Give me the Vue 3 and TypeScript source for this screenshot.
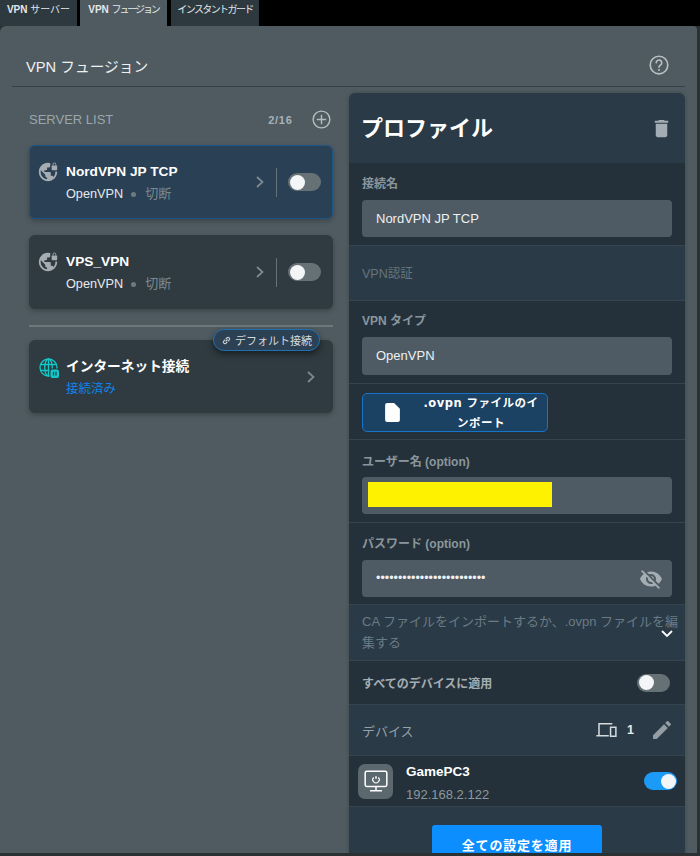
<script setup lang="ts">
const servers = [
  { name: 'NordVPN JP TCP', active: true },
  { name: 'VPS_VPN', active: false },
]
</script>

<template>
  <div class="page">
    <nav class="tabs">
      <div class="tab tab-a"><b>VPN</b> サーバー</div>
      <div class="tab tab-b active"><b>VPN</b> <span class="squeeze-b">フュージョン</span></div>
      <div class="tab tab-c"><span class="squeeze-c">インスタントガード</span></div>
    </nav>
    <main class="panel">
      <header class="head">
        <span class="head-title">VPN フュージョン</span>
        <svg class="help" viewBox="0 0 24 24" width="22" height="22" fill="none" stroke="#b8c0c4" stroke-width="1.8">
          <circle cx="12" cy="12" r="9.6" />
          <path d="M9 9.6a3 3 0 1 1 4.6 2.5c-1 .7-1.6 1.2-1.6 2.4" stroke-linecap="round" />
          <circle cx="12" cy="17.4" r="1.1" fill="#b8c0c4" stroke="none" />
        </svg>
      </header>
      <div class="columns">
        <section class="left">
          <div class="list-head">
            <span class="list-title">SERVER LIST</span>
            <span class="count">2/16</span>
            <svg viewBox="0 0 20 20" width="19" height="19" fill="none" stroke="#b4bcc0" stroke-width="1.5">
              <circle cx="10" cy="10" r="8.8" />
              <path d="M10 5v10M5 10h10" />
            </svg>
          </div>
          <article v-for="s in servers" :key="s.name" class="card server" :class="{ selected: s.active }">
            <svg class="globe" viewBox="0 0 24 24" width="22" height="22">
              <path fill="#a5adb2" d="M12 2C6.48 2 2 6.48 2 12s4.48 10 10 10 10-4.48 10-10S17.52 2 12 2zm-1 17.93c-3.95-.49-7-3.85-7-7.93 0-.62.08-1.21.21-1.79L9 15v1c0 1.1.9 2 2 2v1.93zm6.9-2.54c-.26-.81-1-1.39-1.9-1.39h-1v-3c0-.55-.45-1-1-1H8v-2h2c.55 0 1-.45 1-1V7h2c1.1 0 2-.9 2-2v-.41c2.93 1.19 5 4.06 5 7.41 0 2.08-.8 3.97-2.1 5.39z" />
              <rect class="lock-bg" x="14.5" y="0" width="9" height="11.5" />
              <rect x="16" y="5" width="6" height="5" rx=".8" fill="#a5adb2" />
              <path d="M17.5 5V3.6a1.5 1.5 0 0 1 3 0V5" fill="none" stroke="#a5adb2" stroke-width="1" />
            </svg>
            <div class="info">
              <div class="name">{{ s.name }}</div>
              <div class="sub">OpenVPN<i class="dot"></i><span class="state">切断</span></div>
            </div>
            <svg class="chev" viewBox="0 0 8 12" width="8" height="12" fill="none" stroke="#7f8a90" stroke-width="1.7"><path d="M1 1l5.5 5L1 11" /></svg>
            <span class="divider"></span>
            <span class="toggle"><span class="knob"></span></span>
          </article>
          <hr class="rule" />
          <article class="card internet">
            <span class="badge">
              <svg viewBox="0 0 12 12" width="11" height="11" fill="none" stroke="#c4ccd0" stroke-width="1.3"><path d="M5 7l2.2-2.2M4.4 5.2L3 6.6a1.7 1.7 0 0 0 2.4 2.4l1.4-1.4M5.2 4.4L6.6 3A1.7 1.7 0 0 1 9 5.4L7.6 6.8" /></svg>
              デフォルト接続
            </span>
            <svg class="globe" viewBox="0 0 20 20" width="20" height="20" fill="none" stroke="#12c8c8" stroke-width="1.3">
              <circle cx="9.5" cy="9.5" r="8.5" />
              <ellipse cx="9.5" cy="9.5" rx="3.8" ry="8.5" />
              <path d="M1.5 6.5h16M1.5 12.5h16M9.5 1v17" />
              <rect x="10.5" y="10.5" width="9.5" height="9.5" rx="2" fill="#2f3b41" stroke="none" />
              <rect x="11.5" y="11.5" width="8.5" height="8.5" rx="2" fill="#12c8c8" stroke="none" />
              <path d="M14.5 13.8v3.8M17 13.8v3.8" stroke="#2f3b41" stroke-width="1.2" />
            </svg>
            <div class="info">
              <div class="name big">インターネット接続</div>
              <div class="sub link">接続済み</div>
            </div>
            <svg class="chev solo" viewBox="0 0 8 12" width="8" height="12" fill="none" stroke="#7f8a90" stroke-width="1.7"><path d="M1 1l5.5 5L1 11" /></svg>
          </article>
        </section>

        <aside class="profile">
          <div class="p-head">
            <h1>プロファイル</h1>
            <svg viewBox="0 0 24 24" width="23" height="23" fill="#a3adb3"><path d="M6 19c0 1.1.9 2 2 2h8c1.1 0 2-.9 2-2V7H6v12zM19 4h-3.5l-1-1h-5l-1 1H5v2h14V4z" /></svg>
          </div>
          <div class="row dark r-name">
            <label>接続名</label>
            <div class="field">NordVPN JP TCP</div>
          </div>
          <div class="row r-auth"><span class="muted">VPN認証</span></div>
          <div class="row dark r-type">
            <label>VPN タイプ</label>
            <div class="field tall">OpenVPN</div>
          </div>
          <div class="row dark r-import">
            <button class="import" type="button">
              <svg viewBox="0 0 14 18" width="15" height="19" fill="#fff"><path d="M2 0h6.5L14 5.5V16a2 2 0 0 1-2 2H2a2 2 0 0 1-2-2V2a2 2 0 0 1 2-2z" /></svg>
              <span>.ovpn ファイルのインポート</span>
            </button>
          </div>
          <div class="row dark r-user">
            <label>ユーザー名 (option)</label>
            <div class="field mask"><span class="yellow"></span></div>
          </div>
          <div class="row dark r-pass">
            <label>パスワード (option)</label>
            <div class="field pass">
              <span class="dots">•••••••••••••••••••••••••</span>
              <svg viewBox="0 0 24 24" width="24" height="24" fill="#a3adb3"><path d="M12 7c2.76 0 5 2.24 5 5 0 .65-.13 1.26-.36 1.83l2.92 2.92c1.51-1.26 2.7-2.89 3.43-4.75-1.73-4.39-6-7.5-11-7.5-1.4 0-2.74.25-3.98.7l2.16 2.16C10.74 7.13 11.35 7 12 7zM2 4.27l2.28 2.28.46.46C3.08 8.3 1.78 10.02 1 12c1.73 4.39 6 7.5 11 7.5 1.55 0 3.03-.3 4.38-.84l.42.42L19.73 22 21 20.73 3.27 3 2 4.27zM7.53 9.8l1.55 1.55c-.05.21-.08.43-.08.65 0 1.66 1.34 3 3 3 .22 0 .44-.03.65-.08l1.55 1.55c-.67.33-1.41.53-2.2.53-2.76 0-5-2.24-5-5 0-.79.2-1.53.53-2.2zm4.31-.78l3.15 3.15.02-.16c0-1.66-1.34-3-3-3l-.17.01z" /></svg>
            </div>
          </div>
          <div class="row r-ca">
            <span class="muted ca">CA ファイルをインポートするか、.ovpn ファイルを編集する</span>
            <svg class="ca-chev" viewBox="0 0 12 8" width="12" height="8" fill="none" stroke="#fff" stroke-width="1.8"><path d="M1 1l5 5 5-5" /></svg>
          </div>
          <div class="row dark r-all">
            <span class="all-label">すべてのデバイスに適用</span>
            <span class="toggle"><span class="knob"></span></span>
          </div>
          <div class="row r-dev">
            <span class="dev-label">デバイス</span>
            <svg viewBox="0 0 24 18" width="22" height="16" fill="none" stroke="#d5dadd" stroke-width="1.7"><path d="M3 15V2h15M0 15.5h14M16 6h6v10h-6z" /></svg>
            <b class="dev-count">1</b>
            <svg viewBox="0 0 24 24" width="24" height="24" fill="#939da3"><path d="M3 17.25V21h3.75L17.81 9.94l-3.75-3.75L3 17.25zM20.71 7.04c.39-.39.39-1.02 0-1.41l-2.34-2.34c-.39-.39-1.02-.39-1.41 0l-1.83 1.83 3.75 3.75 1.83-1.83z" /></svg>
          </div>
          <div class="row dark r-pc">
            <span class="pc-icon">
              <svg viewBox="0 0 24 24" width="26" height="26" fill="none" stroke="#fff" stroke-width="1.4">
                <rect x="2" y="3" width="20" height="14" rx="1.5" />
                <path d="M12 17v3.5M6.5 21h11M12 7.5v2.5" />
                <path d="M9.8 8.6a3 3 0 1 0 4.4 0" stroke-width="1" />
              </svg>
            </span>
            <div class="pc-info">
              <div class="pc-name">GamePC3</div>
              <div class="pc-ip">192.168.2.122</div>
            </div>
            <span class="toggle on"><span class="knob"></span></span>
          </div>
          <div class="apply-wrap">
            <button class="apply" type="button">全ての設定を適用</button>
          </div>
        </aside>
      </div>
    </main>
  </div>
</template>

<style>
html, body { margin: 0; background: #2b3033; }
</style>

<style scoped>
.page {
  width: 700px;
  height: 856px;
  overflow: hidden;
  background: #2b3033;
  font-family: "Liberation Sans", "Noto Sans CJK JP", sans-serif;
  color: #fff;
}
.tabs { height: 26px; display: flex; align-items: flex-end; background: #000; }
.tab {
  height: 26px;
  box-sizing: border-box;
  background: #2d393f;
  color: #e3e7e9;
  font-size: 10px;
  line-height: 20px;
  text-align: center;
  white-space: nowrap;
}
.tab-a { width: 77px; margin-right: 3px; }
.tab-b { width: 87px; margin-right: 4px; }
.tab-c { width: 88px; }
.squeeze-b { letter-spacing: -2.1px; }
.squeeze-c { letter-spacing: -1.6px; }
.tab.active { background: #4f5b60; }
.panel {
  height: 827px;
  box-sizing: border-box;
  margin-right: 3px;
  background: #4f5b60;
  border-radius: 6px 4px 0 0;
  padding: 0 12px;
  overflow: hidden;
}
.head {
  height: 61px;
  box-sizing: border-box;
  display: flex;
  align-items: center;
  justify-content: space-between;
  padding: 18px 15px 0 14px;
  border-bottom: 1px solid #353f45;
}
.head-title { font-size: 14.7px; color: #eef1f2; }
.columns { display: flex; gap: 16px; }
.left { width: 321px; flex: none; }
.list-head {
  height: 58px;
  box-sizing: border-box;
  padding: 24px 2.5px 0 17px;
  display: flex;
  align-items: flex-start;
}
.list-title { font-size: 13px; color: #9aa6ac; line-height: 18px; flex: 1; }
.count { font-size: 11px; font-weight: 700; color: #a6b2ba; line-height: 18px; margin-right: 19px; letter-spacing: 0.7px; }
.list-head svg { margin-top: -1px; }
.card {
  position: relative;
  margin-left: 17px;
  width: 304px;
  box-sizing: border-box;
  height: 74px;
  border-radius: 6px;
  background: #2f3b41;
  box-shadow: 0 2px 5px rgba(0, 0, 0, 0.25);
  display: flex;
  align-items: center;
}
.server { padding: 0 12px 0 8px; margin-bottom: 16px; }
.server.selected { background: #2a4055; border: 1px solid #1d5587; padding: 0 11px 0 7px; }
.lock-bg { fill: #2f3b41; }
.selected .lock-bg { fill: #2a4055; }
.globe { flex: none; align-self: flex-start; margin-top: 16px; }
.server.selected .globe { margin-top: 15px; }
.info { margin-left: 7px; flex: 1; min-width: 0; padding-top: 1px; }
.name { font-size: 13.7px; font-weight: 700; line-height: 20px; margin-bottom: 3px; }
.name.big { font-size: 13.7px; }
.sub { font-size: 12.7px; line-height: 18px; color: #e6eaec; display: flex; align-items: center; }
.dot { width: 5px; height: 5px; border-radius: 50%; background: #6e7a80; margin: 0 9px 0 8px; }
.state { color: #7d888e; font-size: 13px; }
.link { color: #1083ec; font-size: 12.5px; }
.chev { flex: none; margin-right: 12px; }
.divider { width: 1px; height: 29px; background: #66727a; margin-right: 11px; }
.toggle {
  flex: none;
  width: 33px;
  height: 18px;
  border-radius: 9px;
  background: #667176;
  position: relative;
  display: block;
}
.knob {
  position: absolute;
  left: 1.5px;
  top: 1.5px;
  width: 15px;
  height: 15px;
  border-radius: 50%;
  background: #f4f5f6;
}
.toggle.on { background: #1b9bf5; }
.toggle.on .knob { left: auto; right: 1.5px; }
.rule { margin: 0 0 13.5px 17px; width: 304px; border: 0; height: 1.5px; background: #6d777c; }
.internet { padding: 0 18px 0 10px; height: 73px; }
.internet .globe { margin-top: 18px; }
.chev.solo { margin-right: 0; }
.badge {
  position: absolute;
  right: 13px;
  top: -11px;
  height: 22px;
  box-sizing: border-box;
  padding: 0 7px;
  display: flex;
  align-items: center;
  gap: 3px;
  border-radius: 11px;
  border: 1.5px solid #2270b4;
  background: #2c4154;
  font-size: 11px;
  color: #d4dbdf;
  white-space: nowrap;
  box-shadow: 0 3px 6px rgba(0, 0, 0, 0.5);
}
.profile {
  width: 336px;
  height: 780px;
  flex: none;
  margin-top: 6px;
  background: #2a3a46;
  border-radius: 6px 6px 0 0;
  overflow: hidden;
  box-shadow: 0 0 4px rgba(0, 0, 0, 0.2);
}
.p-head {
  height: 70px;
  box-sizing: border-box;
  display: flex;
  align-items: center;
  justify-content: space-between;
  padding: 0 12px;
}
h1 { margin: -5px 0 0; font-size: 22px; font-weight: 700; color: #fff; }
.row { box-sizing: border-box; padding: 0 13px; border-bottom: 1px solid #35444f; position: relative; }
.dark { background: #24313a; }
label { display: block; font-size: 12px; font-weight: 700; color: #8b969c; line-height: 16px; }
.field {
  height: 37px;
  box-sizing: border-box;
  border-radius: 4px;
  background: #4f5b64;
  font-size: 13px;
  line-height: 37px;
  padding: 0 14px;
  color: #eef0f1;
}
.r-name { height: 83px; padding-top: 13px; }
.r-name label { margin-bottom: 8px; }
.r-auth { height: 55px; padding-top: 20px; }
.muted { font-size: 12.5px; color: #67747d; line-height: 16px; display: block; }
.r-type { height: 83px; padding-top: 12px; }
.r-type label { margin-bottom: 8px; }
.field.tall { height: 38px; line-height: 38px; }
.r-import { height: 56px; padding-top: 9px; }
.import {
  width: 186px;
  height: 39px;
  box-sizing: border-box;
  border: 1px solid #1574c8;
  border-radius: 5px;
  background: #1c4263;
  display: flex;
  align-items: center;
  padding: 0 0 0 22px;
  color: #fff;
  font-family: "DejaVu Sans", "Noto Sans CJK JP", sans-serif;
  font-size: 11.5px;
  font-weight: 700;
  line-height: 20px;
}
.import span { width: 122px; margin-left: 20px; text-align: center; letter-spacing: 0.5px; }
.r-user { height: 83px; padding-top: 14px; }
.r-user label { margin-bottom: 7px; }
.r-pass { height: 82px; padding-top: 13px; }
.r-pass label { margin-bottom: 8px; }
.field.mask { position: relative; }
.yellow { position: absolute; left: 6px; top: 5px; width: 184px; height: 25px; background: #fff200; }
.field.pass { display: flex; align-items: center; justify-content: space-between; padding-right: 9px; }
.dots { font-size: 12.5px; }
.r-ca { height: 56px; padding: 6px 0 0 13px; }
.ca { line-height: 21px; width: 318px; font-size: 13px; color: #6b7a85; }
.ca-chev { position: absolute; right: 12px; top: 25px; }
.r-all { height: 44px; display: flex; align-items: center; justify-content: space-between; padding-right: 15px; }
.all-label { font-size: 12px; font-weight: 700; color: #a4aeb4; }
.r-dev { height: 51px; display: flex; align-items: center; padding-right: 11px; }
.dev-label { flex: 1; font-size: 13px; color: #96a1a8; margin-right: 1px; }
.dev-count { font-size: 12.5px; color: #e5e9eb; margin: 0 16px 0 9px; }
.r-pc { height: 51px; display: flex; align-items: center; padding: 0 8px 0 9px; }
.pc-icon {
  width: 35px;
  height: 35px;
  border-radius: 7px;
  background: #5b686e;
  display: flex;
  align-items: center;
  justify-content: center;
}
.pc-info { flex: 1; margin-left: 13px; padding-top: 4px; }
.pc-name { font-size: 13.5px; font-weight: 700; line-height: 18px; margin-bottom: 5px; }
.pc-ip { font-size: 13px; color: #8d989e; line-height: 18px; }
.apply-wrap { padding-top: 18px; display: flex; justify-content: center; }
.apply {
  width: 170px;
  height: 38px;
  border: 0;
  border-radius: 3px;
  background: #0d8eff;
  color: #fff;
  font-family: inherit;
  font-size: 13px;
  font-weight: 700;
  padding: 0;
  letter-spacing: 0.8px;
}
</style>
